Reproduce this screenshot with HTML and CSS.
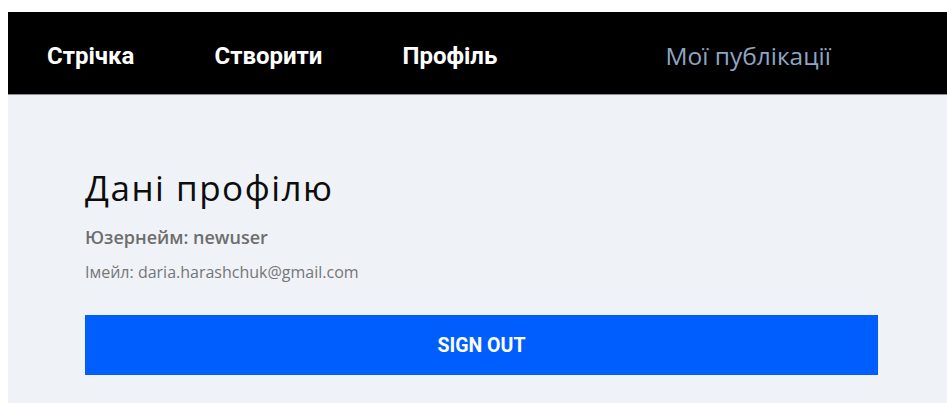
FILE: index.html
```html
<!DOCTYPE html>
<html lang="uk">
<head>
<meta charset="utf-8">
<title>Профіль</title>
<link rel="stylesheet" href="styles.css">
</head>
<body>
<div class="app">
  <header class="topbar">
    <nav class="nav">
      <a class="nav-link" href="#">Стрічка</a>
      <a class="nav-link" href="#">Створити</a>
      <a class="nav-link" href="#">Профіль</a>
      <a class="nav-link nav-link--muted" href="#">Мої публікації</a>
    </nav>
  </header>
  <main class="profile">
    <h1 class="profile-title">Дані профілю</h1>
    <p class="profile-username">Юзернейм: newuser</p>
    <p class="profile-email">Імейл: daria.harashchuk@gmail.com</p>
    <button class="signout" type="button">Sign out</button>
  </main>
</div>
</body>
</html>
```
FILE: styles.css
```css
html, body {
  overflow: hidden;
}

body {
  margin: 12px 0 0 8px;
  background: #ffffff;
  font-family: "Open Sans", "Noto Sans", sans-serif;
}

.app {
  width: 947px;
  min-height: 400px;
  background: #eff3f8;
}

/* top navigation */
.topbar {
  height: 83px;
  box-sizing: border-box;
  padding-top: 5px;
  background: #000000;
  border-bottom: 1px solid #8a8d92;
  display: flex;
  align-items: center;
}

.nav {
  display: flex;
  align-items: center;
  gap: 80px;
  padding-left: 39px;
}

.nav-link {
  color: #ffffff;
  text-decoration: none;
  font-family: Roboto, "Open Sans", sans-serif;
  font-size: 24px;
  font-weight: 700;
}

.nav-link--muted {
  margin-left: 88px;
  font-family: "Open Sans", sans-serif;
  font-size: 24.5px;
  font-weight: 400;
  color: #8ea6c0;
}

/* profile card */
.profile {
  padding: 71px 69px 27px 77px;
}

.profile-title {
  margin: 0;
  font-size: 35px;
  font-weight: 500;
  letter-spacing: 1.5px;
  line-height: 44px;
  color: #0d0d0d;
}

.profile-username {
  margin: 15px 0 0;
  font-size: 18px;
  font-weight: 600;
  line-height: 24px;
  color: #6d6d6d;
}

.profile-email {
  margin: 12px 0 0;
  font-size: 16px;
  line-height: 22px;
  color: #767676;
}

.signout {
  display: block;
  width: 793px;
  height: 60px;
  margin-top: 32px;
  padding: 0;
  border: 0;
  background: #005eff;
  color: #ffffff;
  font-family: Roboto, "Open Sans", sans-serif;
  font-size: 19.5px;
  font-weight: 700;
  text-transform: uppercase;
  cursor: pointer;
}
```
